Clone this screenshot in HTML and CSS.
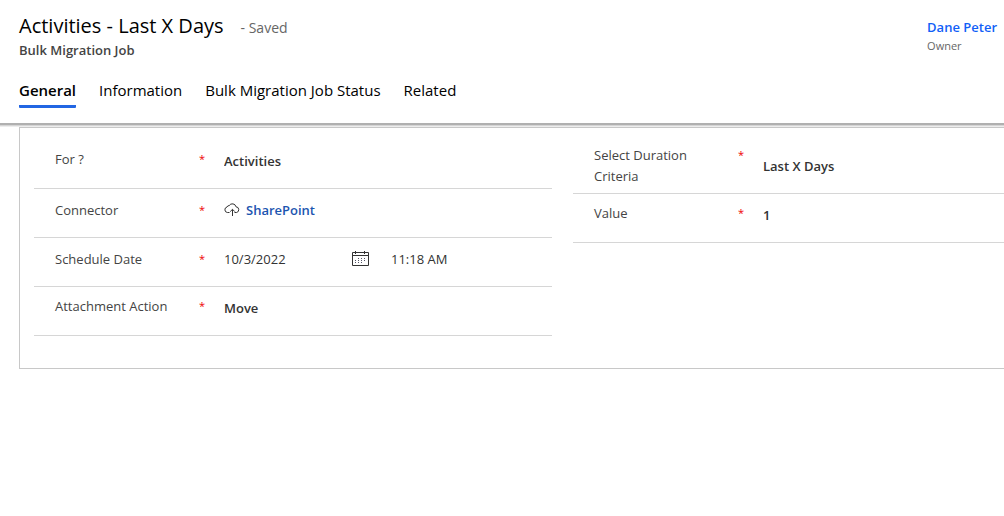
FILE: index.html
```html
<!DOCTYPE html>
<html lang="en">
<head>
<meta charset="utf-8">
<meta name="viewport" content="width=device-width, initial-scale=1">
<title>Activities - Last X Days</title>
<link rel="stylesheet" href="styles.css">
</head>
<body>
<header class="record-header">
  <div class="record-top">
    <div class="record-heading">
      <div class="title-line">
        <h1 class="title">Activities - Last X Days</h1>
        <span class="save-state">- Saved</span>
      </div>
      <p class="entity">Bulk Migration Job</p>
    </div>
    <div class="owner">
      <a class="owner-name" href="#">Dane Peter</a>
      <span class="owner-label">Owner</span>
    </div>
  </div>
  <nav class="tabs">
    <a class="tab tab-active" href="#" aria-current="page">General</a>
    <a class="tab" href="#">Information</a>
    <a class="tab" href="#">Bulk Migration Job Status</a>
    <a class="tab" href="#">Related</a>
  </nav>
</header>
<main>
  <form class="section">
    <div class="column">
      <div class="field">
        <label class="label" for="for">For ?</label>
        <span class="required">*</span>
        <div class="value"><select class="control strong" id="for"><option>Activities</option></select></div>
      </div>
      <div class="field field-low">
        <span class="label">Connector</span>
        <span class="required">*</span>
        <div class="value">
          <svg class="cloud" viewBox="0 0 16 14" aria-hidden="true"><path d="M5.5 9.5H3.4A2.8 2.8 0 0 1 3 4A2.2 2.2 0 0 1 5.2 2.6A3.7 3.7 0 0 1 12 3.8A2.9 2.9 0 0 1 12.6 9.5H10.5M8.5 13V6.5M6.2 8.6L8.5 6.3L10.8 8.6"/></svg>
          <a class="lookup" href="#">SharePoint</a>
        </div>
      </div>
      <div class="field field-low">
        <label class="label" for="date">Schedule Date</label>
        <span class="required">*</span>
        <div class="value value-date">
          <input class="control date" id="date" type="text" value="10/3/2022">
          <button class="calendar-button" type="button" aria-label="Choose date">
            <svg class="calendar" viewBox="0 0 17 16" aria-hidden="true"><path d="M.5 1.5H16.5V14.5H.5ZM.5 4.5H16.5M3.5 0V3M12.5 0V3"/><path class="dots" d="M6 7.5H14M3 9.5H14M3 11.5H12"/></svg>
          </button>
          <input class="control time" type="text" value="11:18 AM" aria-label="Schedule time">
        </div>
      </div>
      <div class="field">
        <label class="label" for="action">Attachment Action</label>
        <span class="required">*</span>
        <div class="value"><select class="control strong" id="action"><option>Move</option></select></div>
      </div>
    </div>
    <div class="column">
      <div class="field field-tall">
        <label class="label" for="duration">Select Duration Criteria</label>
        <span class="required">*</span>
        <div class="value"><select class="control strong" id="duration"><option>Last X Days</option></select></div>
      </div>
      <div class="field">
        <label class="label" for="amount">Value</label>
        <span class="required">*</span>
        <div class="value"><input class="control strong" id="amount" type="text" value="1"></div>
      </div>
    </div>
  </form>
</main>
</body>
</html>
```
FILE: styles.css
```css
* { box-sizing: border-box; }
body {
  margin: 0;
  background: #fff;
  color: #333;
  font-family: "Segoe UI", "Open Sans", "Noto Sans", sans-serif;
  font-size: 13px;
  line-height: 20px;
}
a { text-decoration: none; }
.record-header {
  padding: 12px 7px 15px 19px;
  border-bottom: 2px solid #b0b0b0;
  box-shadow: 0 1px #d5d5d5, 0 2px #ededed;
}
.record-top { display: flex; justify-content: space-between; }
.title-line { display: flex; align-items: baseline; gap: 17px; }
.title { margin: 0; color: #000; font-size: 20px; font-weight: 500; line-height: 28px; }
.save-state { color: #666; font-size: 14px; }
.entity { margin: 0; color: #444; font-weight: 600; }
.owner { display: flex; flex-direction: column; padding-top: 5px; }
.owner-name { color: #1160f7; font-weight: 600; }
.owner-label { color: #666; font-size: 11px; line-height: 18px; }
.tabs { display: flex; gap: 23px; padding-top: 19px; }
.tab { color: #000; font-size: 15px; line-height: 22px; padding-bottom: 4px; }
.tab-active { font-weight: 600; border-bottom: 3px solid #2266e3; border-radius: 1px; }
.section {
  display: grid;
  grid-template-columns: 518fr 431fr;
  gap: 21px;
  margin: 2px 0 0 19px;
  padding: 12px 0 32px 14px;
  border: 1px solid #c8c8c8;
  border-right: 0;
}
.field {
  display: grid;
  grid-template-columns: 144px 25px 1fr;
  min-height: 49px;
  padding: 9px 0 6px 21px;
  border-bottom: 1px solid #d6d6d6;
}
.field-low { padding-top: 11px; }
.field-tall { min-height: 54px; padding-top: 5px; }
.field-tall .value { align-self: center; }
.label { line-height: 21px; padding-right: 32px; white-space: nowrap; color: #444; }
.field-tall .label { white-space: normal; }
.required { color: #e00; font-size: 11px; line-height: 20px; }
.value { display: flex; align-items: center; align-self: start; gap: 6px; }
.control {
  appearance: none;
  width: 100%;
  height: 24px;
  margin: 0;
  padding: 0;
  border: 0;
  background: none;
  color: #333;
  font: inherit;
}
.strong { font-weight: 600; }
.lookup { color: #1c55b0; font-weight: 600; }
.cloud { width: 16px; height: 14px; fill: none; stroke: #333; stroke-width: 1; }
.value-date { gap: 22px; }
.value-date .control { height: 20px; }
.value-date .date { width: 106px; }
.value-date .time { width: 100px; }
.calendar-button { display: flex; padding: 0; border: 0; background: none; }
.calendar { width: 17px; height: 16px; fill: none; stroke: #333; }
.dots { stroke: #556; stroke-dasharray: 1 2; }
```
